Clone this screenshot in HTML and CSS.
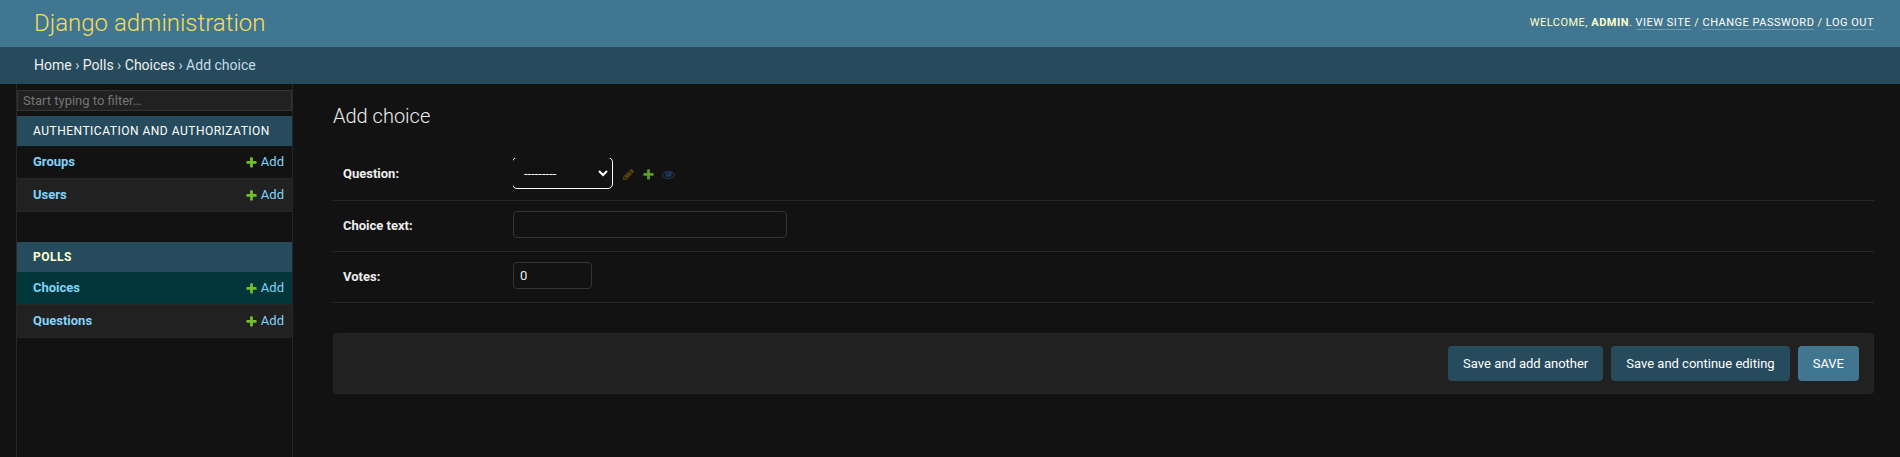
FILE: index.html
```html
<!DOCTYPE html>
<html lang="en">
<head>
<meta charset="utf-8">
<meta name="viewport" content="width=device-width, initial-scale=1">
<title>Add choice | Django site admin</title>
<link rel="stylesheet" href="styles.css">
</head>
<body>
<svg class="icon-defs" aria-hidden="true">
  <symbol id="icon-add" viewBox="0 0 1792 1792"><path d="M1600 796v192q0 40-28 68t-68 28h-416v416q0 40-28 68t-68 28h-192q-40 0-68-28t-28-68v-416h-416q-40 0-68-28t-28-68v-192q0-40 28-68t68-28h416v-416q0-40 28-68t68-28h192q40 0 68 28t28 68v416h416q40 0 68 28t28 68z"/></symbol>
  <symbol id="icon-change" viewBox="0 0 1792 1792"><path d="M491 1536l91-91-235-235-91 91v107h128v128h107zm523-928q0-22-22-22-10 0-17 7l-542 542q-7 7-7 17 0 22 22 22 10 0 17-7l542-542q7-7 7-17zm-54-192l416 416-832 832h-416v-416zm683 96q0 53-37 90l-166 166-416-416 166-165q36-38 90-38 53 0 91 38l235 234q37 39 37 91z"/></symbol>
  <symbol id="icon-view" viewBox="0 0 1792 1792"><path d="M1664 960q-152-236-381-353 61 104 61 225 0 185-131.5 316.5t-316.5 131.5-316.5-131.5-131.5-316.5q0-121 61-225-229 117-381 353 133 205 333.5 326.5t434.5 121.5 434.5-121.5 333.5-326.5zm-720-384q0-20-14-34t-34-14q-125 0-214.5 89.5t-89.5 214.5q0 20 14 34t34 14 34-14 14-34q0-86 61-147t147-61q20 0 34-14t14-34zm848 384q0 34-20 69-140 230-376.5 368.5t-499.5 138.5-499.5-139-376.5-368q-20-35-20-69t20-69q140-229 376.5-368t499.5-139 499.5 139 376.5 368q20 35 20 69z"/></symbol>
</svg>

<header class="header">
  <a class="site-name" href="#">Django administration</a>
  <div class="user-tools">
    Welcome, <strong>admin</strong>.
    <a href="#">View site</a> / <a href="#">Change password</a> / <a href="#">Log out</a>
  </div>
</header>

<nav class="breadcrumbs" aria-label="Breadcrumbs">
  <a href="#">Home</a> › <a href="#">Polls</a> › <a href="#">Choices</a> › Add choice
</nav>

<div class="main">
  <nav class="sidebar" aria-label="Sidebar">
    <input class="filter" type="search" placeholder="Start typing to filter…" aria-label="Filter navigation items">
    <section class="module">
      <h2 class="caption"><a href="#">Authentication and Authorization</a></h2>
      <ul class="models">
        <li class="model"><a class="model-name" href="#">Groups</a><a class="add-link" href="#"><svg class="icon icon-add"><use href="#icon-add"/></svg>Add</a></li>
        <li class="model"><a class="model-name" href="#">Users</a><a class="add-link" href="#"><svg class="icon icon-add"><use href="#icon-add"/></svg>Add</a></li>
      </ul>
    </section>
    <section class="module">
      <h2 class="caption caption-current"><a href="#">Polls</a></h2>
      <ul class="models">
        <li class="model model-current"><a class="model-name" href="#">Choices</a><a class="add-link" href="#"><svg class="icon icon-add"><use href="#icon-add"/></svg>Add</a></li>
        <li class="model"><a class="model-name" href="#">Questions</a><a class="add-link" href="#"><svg class="icon icon-add"><use href="#icon-add"/></svg>Add</a></li>
      </ul>
    </section>
  </nav>

  <main class="content">
    <h1 class="title">Add choice</h1>
    <form>
      <div class="form-row">
        <label class="label" for="question">Question:</label>
        <div class="related">
          <div class="select-wrap">
            <select class="select" id="question"><option>---------</option></select>
          </div>
          <a class="related-link related-off" aria-label="Change selected question"><svg class="icon icon-change"><use href="#icon-change"/></svg></a>
          <a class="related-link related-add" href="#" aria-label="Add another question"><svg class="icon icon-add"><use href="#icon-add"/></svg></a>
          <a class="related-link related-off" aria-label="View selected question"><svg class="icon icon-view"><use href="#icon-view"/></svg></a>
        </div>
      </div>
      <div class="form-row">
        <label class="label" for="choice-text">Choice text:</label>
        <input class="field field-text" id="choice-text" type="text">
      </div>
      <div class="form-row">
        <label class="label" for="votes">Votes:</label>
        <input class="field field-number" id="votes" type="number" value="0">
      </div>
      <div class="submit-row">
        <button class="button" type="button">Save and add another</button>
        <button class="button" type="button">Save and continue editing</button>
        <button class="button button-default" type="button">SAVE</button>
      </div>
    </form>
  </main>
</div>
</body>
</html>
```
FILE: styles.css
```css
* {
  box-sizing: border-box;
}

body {
  margin: 0;
  min-height: 100vh;
  display: flex;
  flex-direction: column;
  background: #121212;
  color: #eee;
  font: 14px/18px Roboto, "Liberation Sans", sans-serif;
  color-scheme: dark;
}

a {
  color: #81d4fa;
  text-decoration: none;
}

.icon-defs {
  display: none;
}

.icon {
  display: block;
  width: 13px;
  height: 13px;
}

.icon-add {
  fill: #70bf2b;
}

.icon-change {
  fill: #b48c08;
}

.icon-view {
  fill: #2b70bf;
}

.header {
  display: flex;
  align-items: center;
  justify-content: space-between;
  padding: 10px 26px 10px 34px;
  background: #417690;
  color: #ffc;
}

.site-name {
  color: #f5dd5d;
  font-size: 24px;
  font-weight: 300;
  line-height: 27px;
}

.user-tools {
  padding-bottom: 2px;
  font-size: 11px;
  letter-spacing: 0.5px;
  text-transform: uppercase;
}

.user-tools a {
  color: #fff;
  border-bottom: 1px solid rgba(255, 255, 255, 0.25);
}

.breadcrumbs {
  padding: 9px 26px 10px 34px;
  background: #264b5d;
  color: #c4dce8;
}

.breadcrumbs a {
  color: #eee;
}

.main {
  flex: 1;
  display: flex;
}

.sidebar {
  flex: none;
  width: 277px;
  margin-left: 16px;
  padding-top: 6px;
  border: 1px solid #272727;
  border-width: 0 1px;
}

.filter {
  display: block;
  width: 100%;
  height: 21px;
  margin: 0 0 5px;
  padding: 0 5px;
  background: #212121;
  border: 1px solid #353535;
  border-radius: 0;
  color: #eee;
  font: 13px Roboto, "Liberation Sans", sans-serif;
  appearance: none;
}

.filter::placeholder {
  color: #757575;
}

.module {
  margin-bottom: 30px;
}

.caption {
  margin: 0;
  padding: 6px 16px;
  background: #264b5d;
  font-size: 12px;
  font-weight: 400;
  letter-spacing: 0.5px;
  text-transform: uppercase;
}

.caption a {
  color: #fff;
}

.caption-current a {
  color: #ffc;
  font-weight: 700;
}

.models {
  margin: 0;
  padding: 0;
  list-style: none;
}

.model {
  display: flex;
  align-items: center;
  justify-content: space-between;
  padding: 7px 8px 7px 16px;
  border-bottom: 1px solid #272727;
  font-size: 13px;
}

.model:nth-child(even) {
  background: #212121;
}

.model-current {
  background: #00363a;
}

.model-name {
  font-weight: 700;
}

.add-link {
  display: flex;
  align-items: center;
  gap: 3px;
}

.content {
  flex: 1;
  padding: 20px 26px 20px 40px;
}

.title {
  margin: 0 0 20px;
  font-size: 20px;
  font-weight: 300;
  line-height: 24px;
}

.form-row {
  display: flex;
  align-items: center;
  min-height: 51px;
  padding: 10px;
  border-bottom: 1px solid #272727;
  font-size: 13px;
}

.label {
  width: 170px;
  font-weight: 700;
}

.related {
  display: flex;
  align-items: center;
  gap: 7px;
}

/* The wrapper clips the focus ring on its top and left sides. */
.select-wrap {
  overflow: hidden;
  margin-right: 2px;
  padding: 0 1px 2px 0;
}

.select {
  display: block;
  width: 99px;
  height: 30px;
  padding: 5px 6px;
  background: #121212;
  border: 1px solid #121212;
  border-radius: 4px;
  outline: 1px solid #fff;
  color: #fff;
  font: 13px Roboto, "Liberation Sans", sans-serif;
}

.related-link {
  padding-top: 1px;
}

.related-off {
  opacity: 0.4;
}

.related-add {
  opacity: 0.8;
}

.field {
  align-self: flex-start;
  height: 27px;
  margin: 0;
  padding: 5px 6px;
  background: #121212;
  border: 1px solid #353535;
  border-radius: 4px;
  color: #eee;
  font: 13px Roboto, "Liberation Sans", sans-serif;
}

.field-text {
  width: 274px;
}

.field-number {
  width: 79px;
}

.submit-row {
  display: flex;
  justify-content: flex-end;
  gap: 8px;
  margin-top: 30px;
  padding: 12px 14px;
  background: #212121;
  border: 1px solid #272727;
  border-radius: 4px;
}

.button {
  height: 35px;
  padding: 0 15px;
  background: #264b5d;
  border: 0;
  border-radius: 4px;
  color: #fff;
  font: 13px Roboto, "Liberation Sans", sans-serif;
}

.button-default {
  background: #417690;
}
```
